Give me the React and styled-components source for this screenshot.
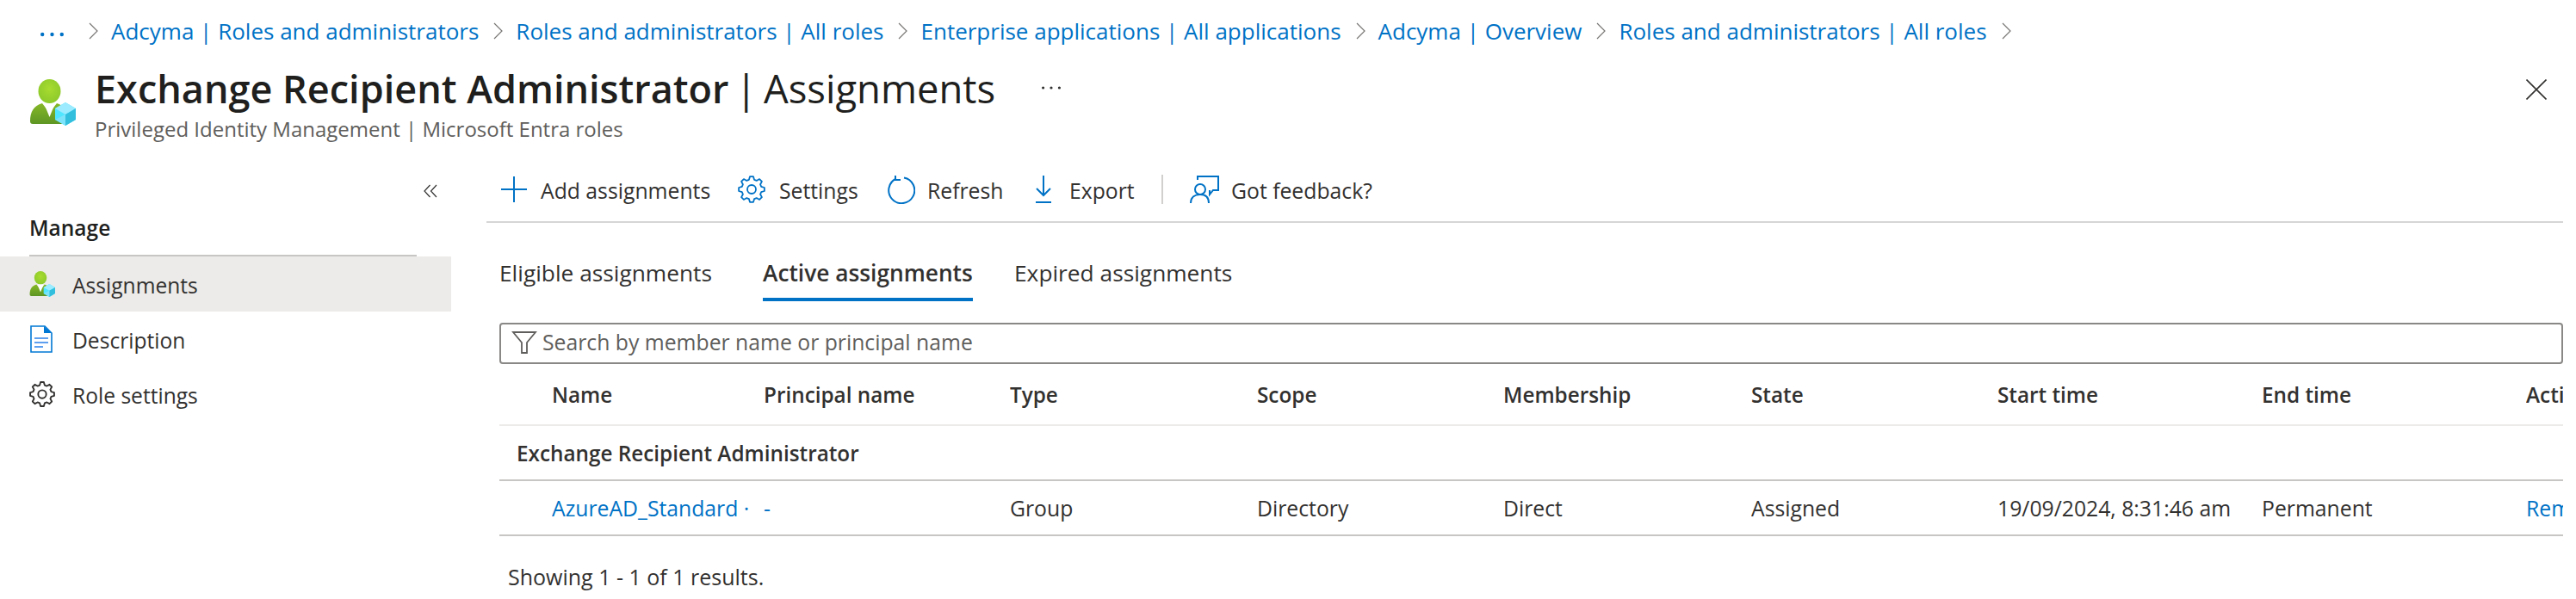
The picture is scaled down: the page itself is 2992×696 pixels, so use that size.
import { Fragment } from 'react'
import styled, { createGlobalStyle } from 'styled-components'

const GlobalStyle = createGlobalStyle`
    html, body {
        margin: 0;
        padding: 0;
        background: #fff;
    }
    body {
        font-family: "Open Sans", "Noto Sans", sans-serif;
        font-size: 24.75px;
        color: #323130;
    }
`

const Page = styled.div`
    width: 2992px;
    height: 696px;
    overflow: hidden;
`

const Breadcrumb = styled.nav`
    height: 72px;
    display: flex;
    align-items: center;
    padding-left: 47px;
    font-size: 26px;
`

const Dots = styled.svg`
    width: 27px;
    height: 6px;
    margin: 8px 12px 0 0;
`

const Crumb = styled.a`
    color: #0072c6;
    white-space: nowrap;
`

const Chevron = styled.svg`
    width: 11px;
    height: 20px;
    margin: 0 15px 0 17px;
`

const Header = styled.header`
    height: 111px;
    display: flex;
    padding-left: 34px;
    position: relative;
`

const TitleIcon = styled.svg`
    width: ${p => p.$size}px;
    height: ${p => p.$size}px;
    flex: none;
`

const HeaderIconWrap = styled.div`
    width: 76px;
    padding-top: 20px;
`

const TitleBlock = styled.div`
    display: flex;
    flex-direction: column;
`

const TitleRow = styled.div`
    display: flex;
    align-items: center;
    height: 60px;
`

const Title = styled.h1`
    margin: 0;
    font-size: 45px;
    line-height: 60px;
    font-weight: 600;
    color: #201f1e;
    white-space: nowrap;
`

const TitleRest = styled.span`
    font-size: 45.4px;
    font-weight: 400;
    word-spacing: -4px;
`

const MoreDots = styled.svg`
    width: 22px;
    height: 6px;
    margin-left: 54px;
`

const Subtitle = styled.div`
    font-size: 24px;
    line-height: 36px;
    color: #605e5c;
`

const CloseIcon = styled.svg`
    position: absolute;
    left: 2934px;
    top: 20px;
    width: 24px;
    height: 24px;
`

const Body = styled.div`
    display: flex;
`

const Sidebar = styled.aside`
    width: 524px;
    margin-right: 41px;
    padding-top: 23px;
    flex: none;
`

const CollapseRow = styled.div`
    height: 32px;
    display: flex;
    align-items: center;
    padding-left: 492px;
`

const SectionTitle = styled.div`
    margin-left: 34px;
    width: 450px;
    height: 58px;
    line-height: 54px;
    font-size: 24.5px;
    font-weight: 600;
    color: #201f1e;
    border-bottom: 2px solid #c8c6c4;
`

const NavItem = styled.div`
    height: 64px;
    display: flex;
    align-items: center;
    padding-left: 34px;
    background: ${p => (p.$active ? '#edebe9' : 'transparent')};
`

const NavLabel = styled.span`
    padding-top: 2px;
    font-size: 24.6px;
`

const NavIconBox = styled.div`
    width: 50px;
    display: flex;
    align-items: center;
`

const Main = styled.main`
    width: 2412px;
`

const Toolbar = styled.div`
    height: 74px;
    padding-left: 16px;
    display: flex;
    align-items: center;
    border-bottom: 2px solid #d6d6d6;
`

const ToolButton = styled.div`
    width: ${p => p.$w}px;
    display: flex;
    align-items: center;
    white-space: nowrap;
`

const ToolLabel = styled.span`
    padding-top: 2px;
`

const ToolIconBox = styled.div`
    width: ${p => p.$w}px;
    display: flex;
    align-items: center;
`

const ToolDivider = styled.div`
    width: 2px;
    height: 34px;
    background: #d2d0ce;
    margin-right: 31px;
`

const Content = styled.div`
    padding-left: 15px;
`

const Tabs = styled.div`
    display: grid;
    grid-template-columns: 306px 292px auto;
    margin-top: 25px;
`

const Tab = styled.div`
    justify-self: start;
    padding-top: 17px;
    padding-bottom: 13px;
    line-height: 32px;
    font-size: 26.3px;
    white-space: nowrap;
    font-weight: ${p => (p.$active ? 600 : 400)};
    color: #323130;
    border-bottom: 4px solid ${p => (p.$active ? '#0072c6' : 'transparent')};
`

const SearchBox = styled.div`
    margin-top: 25px;
    height: 48px;
    box-sizing: border-box;
    border: 2px solid #8a8886;
    border-radius: 4px;
    display: flex;
    align-items: center;
    padding-left: 12px;
    color: #605e5c;
`

const SearchText = styled.span`
    margin-top: -3px;
`

const FilterIcon = styled.svg`
    width: 30px;
    height: 30px;
    margin: -3px 6px 0 0;
    flex: none;
`

const Table = styled.div`
    overflow: hidden;
`

const Row = styled.div`
    display: grid;
    grid-template-columns: 246px 286px 287px 286px 288px 286px 307px 307px 43px;
    align-items: center;
    padding-left: 61px;
    height: ${p => p.$h}px;
    box-sizing: border-box;
    border-bottom: 2px solid ${p => p.$line};
`

const HeadCell = styled.div`
    font-size: 24.3px;
    font-weight: 600;
    color: #323130;
    white-space: nowrap;
    overflow: hidden;
`

const Cell = styled.div`
    white-space: nowrap;
    overflow: hidden;
    padding-top: 1px;
    color: ${p => (p.$link ? '#0072c6' : '#323130')};
`

const GroupRow = styled.div`
    height: 64px;
    box-sizing: border-box;
    display: flex;
    align-items: center;
    padding-left: 20px;
    font-size: 24.3px;
    font-weight: 600;
    border-bottom: 2px solid #c8c6c4;
`

const Results = styled.div`
    margin-top: 31px;
    padding-left: 10px;
    line-height: 32px;
    font-size: 25px;
`

function RoleIcon({ size }) {
    return (
        <TitleIcon $size={size} viewBox="0 0 54 54">
            <defs>
                <linearGradient id={`body${size}`} x1="0" y1="0" x2="0" y2="1">
                    <stop offset="0" stopColor="#86b827" />
                    <stop offset="1" stopColor="#5e9624" />
                </linearGradient>
                <radialGradient id={`head${size}`} cx="0.5" cy="0.4" r="0.6">
                    <stop offset="0" stopColor="#a8dc2f" />
                    <stop offset="1" stopColor="#8cc92b" />
                </radialGradient>
            </defs>
            <ellipse cx="23.5" cy="14" rx="13" ry="14" fill={`url(#head${size})`} />
            <path d="M1 49 C1 38 5 31 15 28 L23.5 39 L32 28 C41 31 46 38 46 49 Q46 52 43 52 L4 52 Q1 52 1 49 Z" fill={`url(#body${size})`} />
            <path d="M17 28 L30 28 L23.5 44 Z" fill="#fff" />
            <path d="M42 27 L54 34 L54 47 L42 54 L30 47 L30 34 Z" fill="#50e6ff" />
            <path d="M42 27 L54 34 L42 41 L30 34 Z" fill="#9cebff" />
            <path d="M42 41 L54 34 L54 47 L42 54 Z" fill="#32bedd" />
            <path d="M30 47 L42 41 L42 54 Z" fill="#7de3fb" />
        </TitleIcon>
    )
}

function ChevronRight() {
    return (
        <Chevron viewBox="0 0 11 20">
            <path d="M1 1 L10 10 L1 19" fill="none" stroke="#797775" strokeWidth="1.2" />
        </Chevron>
    )
}

function ThreeDots({ color, as: Comp, w, r }) {
    return (
        <Comp viewBox={`0 0 ${w} 6`}>
            <circle cx={r} cy="3" r={r} fill={color} />
            <circle cx={w / 2} cy="3" r={r} fill={color} />
            <circle cx={w - r} cy="3" r={r} fill={color} />
        </Comp>
    )
}

function DocIcon() {
    return (
        <svg width="28" height="32" viewBox="0 0 28 32">
            <path d="M2 1 H18 L26 9 V31 H2 Z" fill="#fff" stroke="#0078d4" strokeWidth="1.6" />
            <path d="M17 1 L26 9 H17 Z" fill="#0078d4" />
            <path d="M6 15 H22 M6 20 H22 M6 25 H16" stroke="#5ea0ef" strokeWidth="2" />
        </svg>
    )
}

// 8 toothed gear outline, same shape for toolbar and sidebar
function gearPath() {
    const teeth = 8
    const c = 16
    const pts = []
    for (let i = 0; i < teeth; i++) {
        const a = (i * 2 * Math.PI) / teeth
        const step = (2 * Math.PI) / teeth
        const ring = [
            [11.6, a - step * 0.34],
            [15, a - step * 0.17],
            [15, a + step * 0.17],
            [11.6, a + step * 0.34],
        ]
        ring.forEach(([r, t]) => pts.push(`${(c + r * Math.cos(t)).toFixed(2)} ${(c + r * Math.sin(t)).toFixed(2)}`))
    }
    return `M${pts.join(' L')} Z`
}

function GearIcon({ size, color, strokeWidth }) {
    return (
        <svg width={size} height={size} viewBox="0 0 32 32">
            <path d={gearPath()} fill="none" stroke={color} strokeWidth={strokeWidth} strokeLinejoin="round" />
            <circle cx="16" cy="16" r="5" fill="none" stroke={color} strokeWidth={strokeWidth} />
        </svg>
    )
}

const crumbs = [
    'Adcyma | Roles and administrators',
    'Roles and administrators | All roles',
    'Enterprise applications | All applications',
    'Adcyma | Overview',
    'Roles and administrators | All roles',
]

const toolIcons = {
    add: (
        <svg width="32" height="32" viewBox="0 0 32 32">
            <path d="M16 1 V31 M1 16 H31" stroke="#0072c6" strokeWidth="2" />
        </svg>
    ),
    settings: <GearIcon size={32} color="#0072c6" strokeWidth={1.8} />,
    refresh: (
        <svg width="34" height="34" viewBox="0 0 34 34">
            <path d="M12 4.5 A15 15 0 1 0 21 3.4" fill="none" stroke="#0072c6" strokeWidth="2" />
            <path d="M11 1 V6 H17" fill="none" stroke="#0072c6" strokeWidth="2" />
        </svg>
    ),
    export: (
        <svg width="20" height="32" viewBox="0 0 20 32">
            <path d="M10 0 V23 M2 15 L10 23 L18 15 M1 31 H19" fill="none" stroke="#0072c6" strokeWidth="2" />
        </svg>
    ),
    feedback: (
        <svg width="34" height="34" viewBox="0 0 34 34">
            <path d="M9 6 V2 H33 V18 H27 L23 23 V18" fill="none" stroke="#0072c6" strokeWidth="2" />
            <circle cx="12" cy="17" r="6" fill="none" stroke="#0072c6" strokeWidth="2" />
            <path d="M1 33 C1 26 6 23 12 23 C18 23 22 26 22 33" fill="none" stroke="#0072c6" strokeWidth="2" />
        </svg>
    ),
}

const tools = [
    { label: 'Add assignments', icon: 'add', w: 276, iconW: 47 },
    { label: 'Settings', icon: 'settings', w: 172, iconW: 48 },
    { label: 'Refresh', icon: 'refresh', w: 173, iconW: 48 },
    { label: 'Export', icon: 'export', w: 147, iconW: 40 },
]

const columns = ['Name', 'Principal name', 'Type', 'Scope', 'Membership', 'State', 'Start time', 'End time', 'Actions']

export default function App() {
    return (
        <Page>
            <GlobalStyle />
            <Breadcrumb>
                <ThreeDots color="#0072c6" as={Dots} w={27} r={2.2} />
                {crumbs.map((c, i) => (
                    <Fragment key={i}>
                        <ChevronRight />
                        <Crumb>{c}</Crumb>
                    </Fragment>
                ))}
                <ChevronRight />
            </Breadcrumb>

            <Header>
                <HeaderIconWrap>
                    <RoleIcon size={54} />
                </HeaderIconWrap>
                <TitleBlock>
                    <TitleRow>
                        <Title>
                            Exchange Recipient Administrator
                            <TitleRest> | Assignments</TitleRest>
                        </Title>
                        <ThreeDots color="#323130" as={MoreDots} w={22} r={1.6} />
                    </TitleRow>
                    <Subtitle>Privileged Identity Management | Microsoft Entra roles</Subtitle>
                </TitleBlock>
                <CloseIcon viewBox="0 0 24 24">
                    <path d="M0.5 0.5 L23.5 23.5 M23.5 0.5 L0.5 23.5" stroke="#323130" strokeWidth="1.6" />
                </CloseIcon>
            </Header>

            <Body>
                <Sidebar>
                    <CollapseRow>
                        <svg width="16" height="16" viewBox="0 0 16 16">
                            <path d="M7.5 1 L1 8 L7.5 15 M15 1 L8.5 8 L15 15" fill="none" stroke="#323130" strokeWidth="1.2" />
                        </svg>
                    </CollapseRow>
                    <SectionTitle>Manage</SectionTitle>
                    <NavItem $active>
                        <NavIconBox><RoleIcon size={30} /></NavIconBox>
                        <NavLabel>Assignments</NavLabel>
                    </NavItem>
                    <NavItem>
                        <NavIconBox><DocIcon /></NavIconBox>
                        <NavLabel>Description</NavLabel>
                    </NavItem>
                    <NavItem>
                        <NavIconBox><GearIcon size={30} color="#323130" strokeWidth={2} /></NavIconBox>
                        <NavLabel>Role settings</NavLabel>
                    </NavItem>
                </Sidebar>

                <Main>
                    <Toolbar>
                        {tools.map(t => (
                            <ToolButton key={t.label} $w={t.w}>
                                <ToolIconBox $w={t.iconW}>{toolIcons[t.icon]}</ToolIconBox>
                                <ToolLabel>{t.label}</ToolLabel>
                            </ToolButton>
                        ))}
                        <ToolDivider />
                        <ToolButton $w={220}>
                            <ToolIconBox $w={48}>{toolIcons.feedback}</ToolIconBox>
                            <ToolLabel>Got feedback?</ToolLabel>
                        </ToolButton>
                    </Toolbar>

                    <Content>
                        <Tabs>
                            <Tab>Eligible assignments</Tab>
                            <Tab $active>Active assignments</Tab>
                            <Tab>Expired assignments</Tab>
                        </Tabs>

                        <SearchBox>
                            <FilterIcon viewBox="0 0 30 30">
                                <path d="M2 3 H28 L18 15 V27 H12 V15 Z" fill="none" stroke="#605e5c" strokeWidth="1.8" />
                            </FilterIcon>
                            <SearchText>Search by member name or principal name</SearchText>
                        </SearchBox>

                        <Table>
                            <Row $h={72} $line="#edebe9">
                                {columns.map(c => <HeadCell key={c}>{c}</HeadCell>)}
                            </Row>
                            <GroupRow>Exchange Recipient Administrator</GroupRow>
                            <Row $h={64} $line="#c8c6c4">
                                <Cell $link>AzureAD_Standard ·</Cell>
                                <Cell $link>-</Cell>
                                <Cell>Group</Cell>
                                <Cell>Directory</Cell>
                                <Cell>Direct</Cell>
                                <Cell>Assigned</Cell>
                                <Cell>19/09/2024, 8:31:46 am</Cell>
                                <Cell>Permanent</Cell>
                                <Cell $link>Remove</Cell>
                            </Row>
                        </Table>

                        <Results>Showing 1 - 1 of 1 results.</Results>
                    </Content>
                </Main>
            </Body>
        </Page>
    )
}
